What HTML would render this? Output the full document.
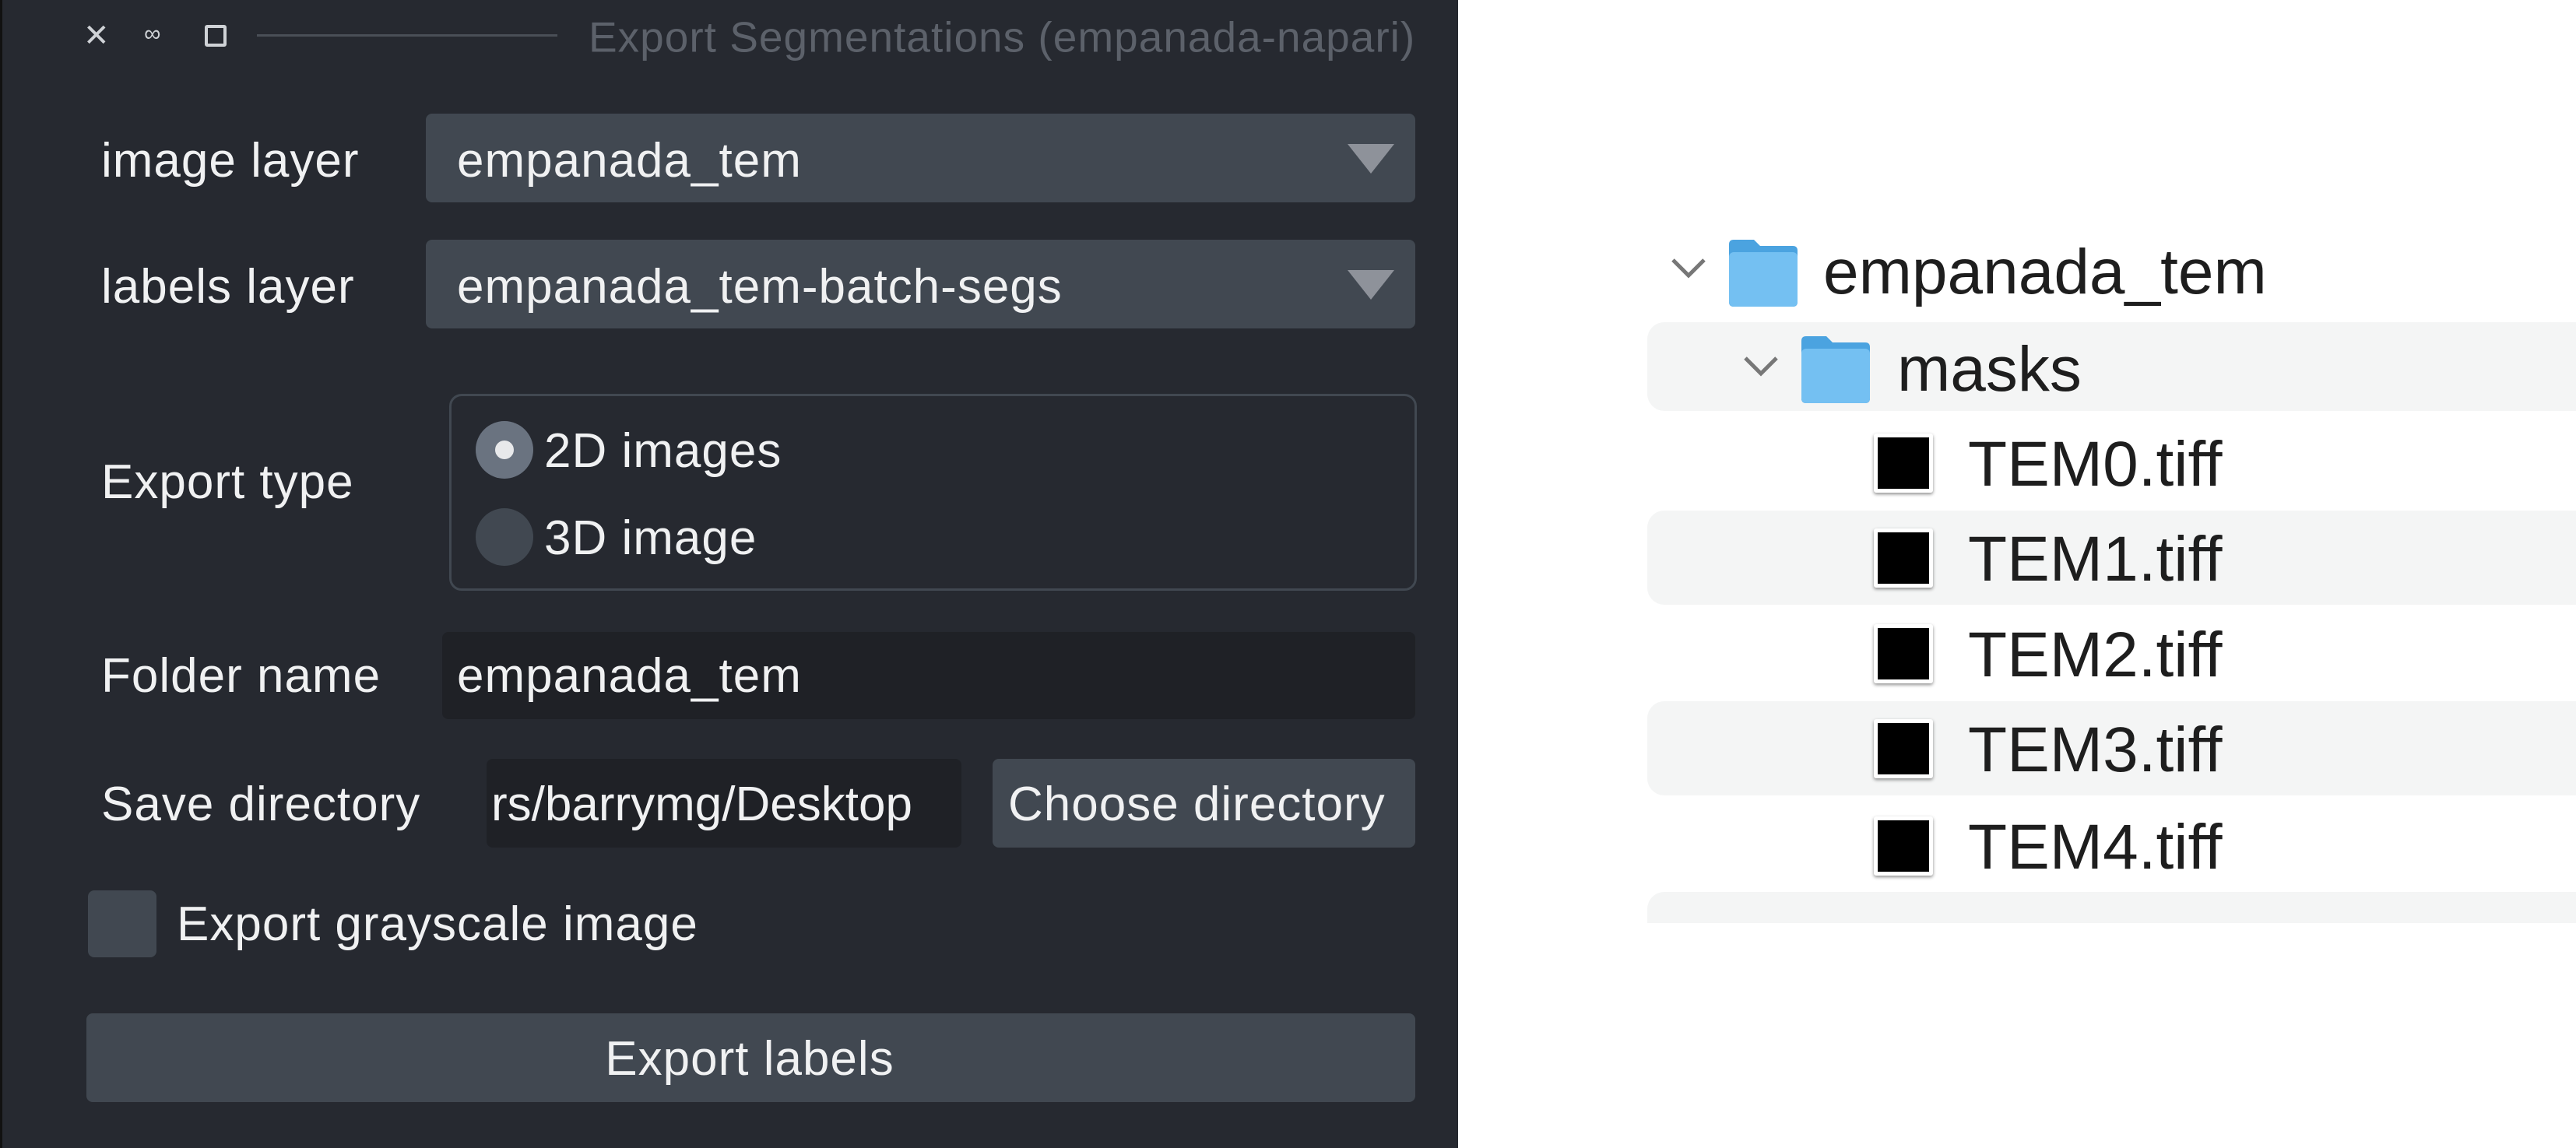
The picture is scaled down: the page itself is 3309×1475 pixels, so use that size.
<!DOCTYPE html>
<html><head><meta charset="utf-8"><style>
body{margin:0;width:3309px;height:1475px;background:#fff;position:relative;overflow:hidden;font-family:"Liberation Sans",sans-serif}
.p{position:absolute;left:0;top:0;width:1870px;height:1475px;background:#262930;border-left:3px solid #111}
.a{position:absolute}
.t{position:absolute;color:#f0f1f2;font-size:62px;letter-spacing:1px;line-height:1;white-space:nowrap;transform:translateY(-50%)}
.box{position:absolute;border-radius:8px}
.d{color:#1e1e1e;font-size:82px;letter-spacing:0}
.row{position:absolute;left:2116px;right:0;background:#f4f5f5;border-radius:22px 0 0 22px}
.fi{position:absolute;width:66px;height:66px;background:#000;border:5px solid #fff;box-shadow:0 2px 4px rgba(0,0,0,.45);border-radius:3px}
.fold{position:absolute}
</style></head><body>
<div class="p">
  <div class="t" style="left:104px;top:46px;font-size:40px;color:#cfd2d6">✕</div>
  <div class="t" style="left:182px;top:44px;font-size:30px;color:#cfd2d6">∞</div>
  <div class="a" style="left:260px;top:32px;width:20px;height:20px;border:4px solid #cfd2d6;border-radius:3px"></div>
  <div class="a" style="left:327px;top:44px;width:386px;height:3px;background:#4a4f57"></div>
  <div class="t" style="left:753px;top:48px;font-size:55px;letter-spacing:1px;color:#5c616a">Export Segmentations (empanada-napari)</div>

  <div class="t" style="left:127px;top:207px">image layer</div>
  <div class="box" style="left:544px;top:146px;width:1271px;height:114px;background:#414851"></div>
  <div class="t" style="left:584px;top:207px">empanada_tem</div>
  <div class="a" style="left:1728px;top:185px;width:0;height:0;border-left:30px solid transparent;border-right:30px solid transparent;border-top:38px solid #8e929a"></div>

  <div class="t" style="left:127px;top:369px">labels layer</div>
  <div class="box" style="left:544px;top:308px;width:1271px;height:114px;background:#414851"></div>
  <div class="t" style="left:584px;top:369px">empanada_tem-batch-segs</div>
  <div class="a" style="left:1728px;top:347px;width:0;height:0;border-left:30px solid transparent;border-right:30px solid transparent;border-top:38px solid #8e929a"></div>

  <div class="box" style="left:574px;top:506px;width:1237px;height:247px;border:3px solid #414851;border-radius:16px"></div>
  <div class="t" style="left:127px;top:620px">Export type</div>
  <div class="a" style="left:608px;top:541px;width:74px;height:74px;border-radius:50%;background:#6a7380"></div>
  <div class="a" style="left:633px;top:566px;width:24px;height:24px;border-radius:50%;background:#e8e9eb"></div>
  <div class="t" style="left:696px;top:580px">2D images</div>
  <div class="a" style="left:608px;top:653px;width:74px;height:74px;border-radius:50%;background:#414851"></div>
  <div class="t" style="left:696px;top:692px">3D image</div>

  <div class="t" style="left:127px;top:869px">Folder name</div>
  <div class="box" style="left:565px;top:812px;width:1250px;height:112px;background:#1f2126"></div>
  <div class="t" style="left:584px;top:869px">empanada_tem</div>

  <div class="t" style="left:127px;top:1034px">Save directory</div>
  <div class="box" style="left:622px;top:975px;width:610px;height:114px;background:#1f2126"></div>
  <div class="t" style="left:628px;top:1034px;letter-spacing:0">rs/barrymg/Desktop</div>
  <div class="box" style="left:1272px;top:975px;width:543px;height:114px;background:#414851"></div>
  <div class="t" style="left:1292px;top:1034px">Choose directory</div>

  <div class="box" style="left:110px;top:1144px;width:88px;height:86px;background:#414851"></div>
  <div class="t" style="left:224px;top:1188px">Export grayscale image</div>

  <div class="box" style="left:108px;top:1302px;width:1707px;height:114px;background:#414851"></div>
  <div class="t" style="left:0;width:1920px;text-align:center;top:1361px">Export labels</div>
</div>

<div class="row" style="top:414px;height:114px"></div>
<div class="row" style="top:656px;height:121px"></div>
<div class="row" style="top:901px;height:121px"></div>
<div class="row" style="top:1146px;height:40px;border-radius:22px 0 0 0"></div>

<svg class="a" style="left:2145px;top:330px" width="48" height="30"><path d="M4 4 L24 24 L44 4" fill="none" stroke="#777" stroke-width="5"/></svg>
<svg class="fold" style="left:2215px;top:306px" width="96" height="90"><path d="M6 8 Q6 2 12 2 H38 L46 10 H88 Q94 10 94 16 V82 Q94 88 88 88 H12 Q6 88 6 82 Z" fill="#4ba3e0"/><rect x="6" y="18" width="88" height="70" rx="6" fill="#74c0f2"/></svg>
<div class="t d" style="left:2342px;top:350px">empanada_tem</div>

<svg class="a" style="left:2238px;top:456px" width="48" height="30"><path d="M4 4 L24 24 L44 4" fill="none" stroke="#777" stroke-width="5"/></svg>
<svg class="fold" style="left:2308px;top:430px" width="96" height="90"><path d="M6 8 Q6 2 12 2 H38 L46 10 H88 Q94 10 94 16 V82 Q94 88 88 88 H12 Q6 88 6 82 Z" fill="#4ba3e0"/><rect x="6" y="18" width="88" height="70" rx="6" fill="#74c0f2"/></svg>
<div class="t d" style="left:2437px;top:475px">masks</div>

<div class="fi" style="left:2407px;top:557px"></div><div class="t d" style="left:2528px;top:597px">TEM0.tiff</div>
<div class="fi" style="left:2407px;top:679px"></div><div class="t d" style="left:2528px;top:719px">TEM1.tiff</div>
<div class="fi" style="left:2407px;top:802px"></div><div class="t d" style="left:2528px;top:842px">TEM2.tiff</div>
<div class="fi" style="left:2407px;top:924px"></div><div class="t d" style="left:2528px;top:964px">TEM3.tiff</div>
<div class="fi" style="left:2407px;top:1049px"></div><div class="t d" style="left:2528px;top:1089px">TEM4.tiff</div>
</body></html>
